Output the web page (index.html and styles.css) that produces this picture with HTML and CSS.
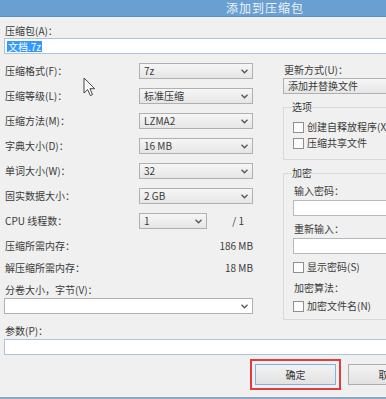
FILE: index.html
```html
<!DOCTYPE html>
<html lang="zh-CN">
<head>
<meta charset="utf-8">
<title>添加到压缩包</title>
<link rel="stylesheet" href="styles.css">
</head>
<body>
<div class="win">
  <div class="titlebar"><span class="title">添加到压缩包</span></div>
  <div class="content">
    <div class="lbl lbl-top">压缩包(A)：</div>
    <div class="input archive"><span class="sel">文档.7z</span></div>

    <div class="cols">
      <div class="left">
        <div class="row"><span class="lbl">压缩格式(F)：</span><div class="combo"><span>7z</span><svg class="chev" width="7" height="5" viewBox="0 0 7 5"><path d="M0.5 0.8 L3.5 3.8 L6.5 0.8" fill="none" stroke="#555" stroke-width="1.3"/></svg></div></div>
        <div class="row"><span class="lbl">压缩等级(L)：</span><div class="combo"><span>标准压缩</span><svg class="chev" width="7" height="5" viewBox="0 0 7 5"><path d="M0.5 0.8 L3.5 3.8 L6.5 0.8" fill="none" stroke="#555" stroke-width="1.3"/></svg></div></div>
        <div class="row"><span class="lbl">压缩方法(M)：</span><div class="combo"><span>LZMA2</span><svg class="chev" width="7" height="5" viewBox="0 0 7 5"><path d="M0.5 0.8 L3.5 3.8 L6.5 0.8" fill="none" stroke="#555" stroke-width="1.3"/></svg></div></div>
        <div class="row"><span class="lbl">字典大小(D)：</span><div class="combo"><span>16 MB</span><svg class="chev" width="7" height="5" viewBox="0 0 7 5"><path d="M0.5 0.8 L3.5 3.8 L6.5 0.8" fill="none" stroke="#555" stroke-width="1.3"/></svg></div></div>
        <div class="row"><span class="lbl">单词大小(W)：</span><div class="combo"><span>32</span><svg class="chev" width="7" height="5" viewBox="0 0 7 5"><path d="M0.5 0.8 L3.5 3.8 L6.5 0.8" fill="none" stroke="#555" stroke-width="1.3"/></svg></div></div>
        <div class="row"><span class="lbl">固实数据大小：</span><div class="combo"><span>2 GB</span><svg class="chev" width="7" height="5" viewBox="0 0 7 5"><path d="M0.5 0.8 L3.5 3.8 L6.5 0.8" fill="none" stroke="#555" stroke-width="1.3"/></svg></div></div>
        <div class="row"><span class="lbl">CPU 线程数：</span><div class="combo combo-sm"><span>1</span><svg class="chev" width="7" height="5" viewBox="0 0 7 5"><path d="M0.5 0.8 L3.5 3.8 L6.5 0.8" fill="none" stroke="#555" stroke-width="1.3"/></svg></div><span class="of">/ 1</span></div>
        <div class="mem mem1"><span class="lbl">压缩所需内存：</span><span class="val">186 MB</span></div>
        <div class="mem"><span class="lbl">解压缩所需内存：</span><span class="val">18 MB</span></div>
        <div class="lbl lbl-vol">分卷大小，字节(V)：</div>
        <div class="combo combo-wide"><span></span><svg class="chev" width="7" height="5" viewBox="0 0 7 5"><path d="M0.5 0.8 L3.5 3.8 L6.5 0.8" fill="none" stroke="#555" stroke-width="1.3"/></svg></div>
      </div>

      <div class="right">
        <div class="lbl lbl-upd">更新方式(U)：</div>
        <div class="combo combo-right"><span>添加并替换文件</span><svg class="chev" width="7" height="5" viewBox="0 0 7 5"><path d="M0.5 0.8 L3.5 3.8 L6.5 0.8" fill="none" stroke="#555" stroke-width="1.3"/></svg></div>

        <fieldset class="group group-opt">
          <legend>选项</legend>
          <div class="chk chk-first"><span class="box"></span><span>创建自释放程序(X)</span></div>
          <div class="chk chk-next"><span class="box"></span><span>压缩共享文件</span></div>
        </fieldset>

        <fieldset class="group group-enc">
          <legend>加密</legend>
          <div class="lbl glbl glbl-first">输入密码：</div>
          <div class="input ginput"></div>
          <div class="lbl glbl">重新输入：</div>
          <div class="input ginput"></div>
          <div class="chk chk-show"><span class="box"></span><span>显示密码(S)</span></div>
          <div class="lbl glbl glbl-alg">加密算法：</div>
          <div class="chk chk-name"><span class="box"></span><span>加密文件名(N)</span></div>
        </fieldset>
      </div>
    </div>

    <div class="lbl lbl-par">参数(P)：</div>
    <div class="input params"></div>

    <div class="buttons">
      <button class="btn btn-ok">确定</button>
      <button class="btn">取消</button>
      <button class="btn">帮助</button>
    </div>
  </div>
</div>
<svg class="cursor" width="13" height="20" viewBox="0 0 13 20"><path d="M1 1 L1 16 L4.6 12.6 L7.4 18.6 L9.6 17.6 L6.9 11.7 L11.6 11.7 Z" fill="#fff" stroke="#444" stroke-width="1" stroke-linejoin="round"/></svg>
</body>
</html>
```

FILE: styles.css
```css
html, body {
  margin: 0;
  padding: 0;
}
body {
  width: 386px;
  height: 399px;
  overflow: hidden;
  position: relative;
  background: #f0f0f0;
  font-family: "Noto Sans CJK SC", "Noto Sans", sans-serif;
  font-size: 10px;
  line-height: 12px;
  color: #3a3a3a;
}
.win {
  width: 530px;
  height: 399px;
  box-sizing: border-box;
  background: #f0f0f0;
  border-bottom: 2px solid #8ea8c4;
}
.titlebar {
  height: 16px;
  background: #6a9fd2;
  border-bottom: 1px solid #5d90c4;
  display: flex;
  justify-content: center;
  align-items: center;
}
.title {
  font-size: 12px;
  letter-spacing: 1px;
  color: #edf3f9;
  line-height: 14px;
}
.content {
  padding: 8px 4px 0 4px;
}
.lbl {
  padding-left: 1px;
  white-space: nowrap;
  line-height: 12px;
}
.input {
  height: 16px;
  box-sizing: border-box;
  border: 1px solid #b4b8c0;
  background: #fff;
}
.archive {
  margin-top: 1px;
  border-color: #a9c3e0;
  display: flex;
  align-items: center;
}
.sel {
  margin-left: 2px;
  padding: 0 1px;
  background: #3399ff;
  color: #fff;
  line-height: 11px;
}
.cols {
  display: flex;
  margin-top: 9px;
}
.left {
  width: 249px;
  display: flex;
  flex-direction: column;
}
.row {
  height: 16px;
  margin-bottom: 9px;
  display: flex;
  align-items: center;
}
.row .lbl {
  width: 134px;
}
.combo {
  width: 114px;
  height: 16px;
  box-sizing: border-box;
  border: 1px solid #b0b0b0;
  background: linear-gradient(#f6f6f6, #e6e6e6);
  display: flex;
  align-items: center;
  justify-content: space-between;
  padding: 0 4px 0 4px;
  white-space: nowrap;
}
.combo-sm {
  width: 68px;
}
.of {
  margin-left: auto;
  margin-right: 9px;
}
.mem {
  display: flex;
  justify-content: space-between;
  margin-top: 10px;
  height: 12px;
}
.mem1 {
  margin-top: 2px;
}
.val {
  padding-right: 0;
}
.lbl-vol {
  margin-top: 10px;
}
.combo-wide {
  width: 249px;
  margin-top: 2px;
  background: #fff;
}
.right {
  width: 245px;
  margin-left: 30px;
  display: flex;
  flex-direction: column;
}
.lbl-upd {
  margin-top: 1px;
}
.combo-right {
  width: 245px;
  margin-top: 2px;
}
.group {
  margin: 7px 0 0 0;
  padding: 0 0 0 8px;
  border: 1px solid #d9d9d9;
  min-width: 0;
}
.group legend {
  padding: 0;
  line-height: 12px;
}
.group-opt {
  padding-bottom: 10px;
}
.group-enc {
  padding-bottom: 7px;
  padding-right: 12px;
}
.chk {
  display: flex;
  align-items: center;
  height: 12px;
  margin-left: 1px;
  white-space: nowrap;
}
.box {
  width: 11px;
  height: 11px;
  box-sizing: border-box;
  border: 1px solid #8f8f8f;
  background: #fcfcfc;
  margin-right: 3px;
  flex: none;
}
.chk-first { margin-top: 8px; }
.chk-next { margin-top: 4px; }
.glbl { margin-left: 1px; margin-top: 7px; }
.glbl-first { margin-top: 6px; }
.ginput {
  margin-top: 3px;
  margin-left: 1px;
}
.chk-show { margin-top: 7px; }
.glbl-alg { margin-top: 9px; }
.chk-name { margin-top: 6px; }
.lbl-par {
  margin-top: 5px;
}
.params {
  margin-top: 2px;
  border-color: #a9c3e0;
}
.buttons {
  display: flex;
  margin-top: 9px;
  padding-left: 251px;
  gap: 12px;
}
.btn {
  width: 81px;
  height: 21px;
  box-sizing: border-box;
  border: 1px solid #adadad;
  background: linear-gradient(#f2f2f2, #e2e2e2);
  font-family: inherit;
  font-size: 10px;
  color: #333;
  padding: 0;
  flex: none;
}
.btn-ok {
  border-color: #7fb2e6;
  outline: 2px solid #e23b3b;
  outline-offset: 3px;
}
.cursor {
  position: absolute;
  left: 83px;
  top: 77px;
}
```
